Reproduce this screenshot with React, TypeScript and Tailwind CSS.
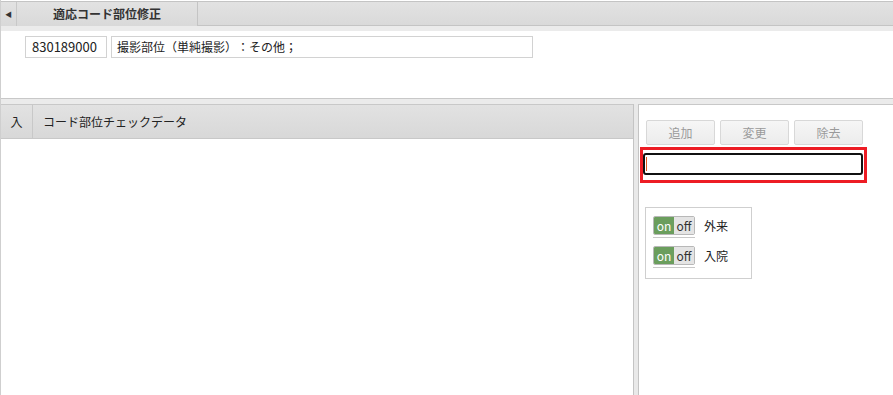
import React from "react";

const font = { fontFamily: '"Noto Sans CJK JP", "Noto Sans", sans-serif' };

const Toggle = ({ label }: { label: string }) => (
  <div className="flex h-[30px] items-start">
    <div className="flex flex-col">
      <div className="flex h-[19px] w-[42px] overflow-hidden rounded-[2px] border border-[#b8b8b8] text-[12px] leading-[17px]">
        <span className="w-[20px] bg-[#6b9e5d] text-center text-white">on</span>
        <span className="flex-1 bg-[#e4e4e4] text-center text-[#333]">off</span>
      </div>
      <div className="mt-[1px] h-[2px] w-[42px] border-b border-[#c8c8c8]" />
    </div>
    <span className="ml-[9px] text-[12px] leading-[19px] text-[#222]">{label}</span>
  </div>
);

const ActionButton = ({ label }: { label: string }) => (
  <button className="h-[25px] w-[69px] rounded-[2px] border border-[#d8d8d8] bg-gradient-to-b from-[#f6f6f6] to-[#ececec] text-[12px] text-[#9a9a9a]">
    {label}
  </button>
);

export default function App() {
  return (
    <div
      className="flex h-[395px] w-[893px] flex-col overflow-hidden border-l border-[#cfcfcf] bg-white [text-spacing-trim:space-all]"
      style={font}
    >
      {/* tab strip */}
      <div className="mt-[1px] flex h-[25px] border-t border-[#c4c4c4] bg-gradient-to-b from-[#e2e2e2] to-[#d9d9d9]">
        <div className="flex w-[16px] items-center justify-center border-r border-[#c8c8c8]">
          <span className="text-[7px] leading-none text-[#333]">◀</span>
        </div>
        <div className="flex w-[181px] items-center justify-center border-r border-[#c4c4c4] text-[12px] font-bold text-[#333]">
          適応コード部位修正
        </div>
        <div className="flex-1 border-b border-[#c4c4c4]" />
      </div>
      <div className="h-[5px] bg-[#ebebeb]" />

      {/* code row */}
      <div className="flex h-[67px] items-start gap-[4px] pl-[24px] pt-[5px]">
        <div className="h-[22px] w-[82px] border border-[#d2d2d2] pl-[6px] text-[13px] leading-[20px] text-[#222]">
          830189000
        </div>
        <div className="h-[22px] w-[422px] border border-[#d2d2d2] pl-[5px] text-[12px] leading-[20px] text-[#222]">
          撮影部位（単純撮影）：その他；
        </div>
      </div>
      <div className="h-[6px] border-t border-[#c8c8c8] bg-[#ebebeb]" />

      {/* lower panels */}
      <div className="flex flex-1">
        <div className="flex w-[632px] flex-col">
          <div className="flex h-[35px] border-t border-b border-[#c8c8c8] bg-gradient-to-b from-[#e2e2e2] to-[#d8d8d8] text-[12px] text-[#222]">
            <div className="flex w-[32px] items-center justify-center border-r border-[#c8c8c8]">入</div>
            <div className="flex items-center pl-[10px]">コード部位チェックデータ</div>
          </div>
          <div className="flex-1 bg-white" />
        </div>

        <div className="w-[6px] border-l border-r border-[#c4c4c4] bg-[#e9e9e9]" />

        <div className="flex flex-1 flex-col border-t border-[#c8c8c8]">
          <div className="flex gap-[5px] pl-[7px] pt-[15px]">
            <ActionButton label="追加" />
            <ActionButton label="変更" />
            <ActionButton label="除去" />
          </div>
          <div className="ml-[1px] mt-[2px] h-[36px] w-[227px] border-[3px] border-[#ed1c24] pt-[3px]">
            <div className="relative h-[22px] w-[220px] rounded-[3px] border-2 border-[#111]">
              <span className="absolute left-[1px] top-[2px] h-[14px] w-px bg-[#e05a20]" />
            </div>
          </div>
          <div className="ml-[6px] mt-[24px] h-[72px] w-[107px] border border-[#cfcfcf] pl-[7px] pt-[8px]">
            <Toggle label="外来" />
            <Toggle label="入院" />
          </div>
        </div>
      </div>
    </div>
  );
}
